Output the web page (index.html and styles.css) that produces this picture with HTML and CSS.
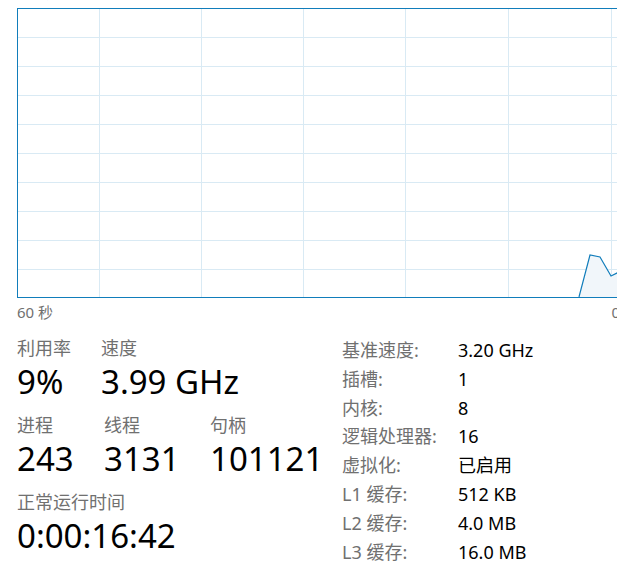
FILE: index.html
```html
<!DOCTYPE html>
<html lang="zh-CN">
<head>
    <meta charset="UTF-8">
    <meta name="viewport" content="width=device-width, initial-scale=1.0">
    <title>CPU</title>
    <link rel="stylesheet" href="styles.css">
</head>
<body>
    <div class="panel">
        <div class="chart-head">
            <span>% 利用率</span>
            <span>100%</span>
        </div>

        <div class="chart">
            <svg width="601" height="288" viewBox="0 0 601 288">
                <g class="grid">
                    <line x1="81.5" y1="0" x2="81.5" y2="288"/>
                    <line x1="183.5" y1="0" x2="183.5" y2="288"/>
                    <line x1="285.5" y1="0" x2="285.5" y2="288"/>
                    <line x1="387.5" y1="0" x2="387.5" y2="288"/>
                    <line x1="490.5" y1="0" x2="490.5" y2="288"/>
                    <line x1="593.5" y1="0" x2="593.5" y2="288"/>
                    <line x1="0" y1="28.5" x2="601" y2="28.5"/>
                    <line x1="0" y1="57.5" x2="601" y2="57.5"/>
                    <line x1="0" y1="86.5" x2="601" y2="86.5"/>
                    <line x1="0" y1="115.5" x2="601" y2="115.5"/>
                    <line x1="0" y1="144.5" x2="601" y2="144.5"/>
                    <line x1="0" y1="173.5" x2="601" y2="173.5"/>
                    <line x1="0" y1="202.5" x2="601" y2="202.5"/>
                    <line x1="0" y1="231.5" x2="601" y2="231.5"/>
                    <line x1="0" y1="260.5" x2="601" y2="260.5"/>
                </g>
                <polygon class="area" points="561,288 572,246 582,248 593,267 601,263 601,288"/>
                <polyline class="line" points="561,288 572,246 582,248 593,267 601,263"/>
            </svg>
        </div>

        <div class="axis">
            <span>60 秒</span>
            <span>0</span>
        </div>

        <div class="details">
            <div class="dynamic">
                <div class="stat-row">
                    <div class="stat w84">
                        <div class="label">利用率</div>
                        <div class="value">9%</div>
                    </div>
                    <div class="stat">
                        <div class="label">速度</div>
                        <div class="value">3.99 GHz</div>
                    </div>
                </div>
                <div class="stat-row">
                    <div class="stat w87">
                        <div class="label">进程</div>
                        <div class="value">243</div>
                    </div>
                    <div class="stat w106">
                        <div class="label">线程</div>
                        <div class="value">3131</div>
                    </div>
                    <div class="stat">
                        <div class="label">句柄</div>
                        <div class="value">101121</div>
                    </div>
                </div>
                <div class="stat-row">
                    <div class="stat">
                        <div class="label">正常运行时间</div>
                        <div class="value">0:00:16:42</div>
                    </div>
                </div>
            </div>

            <div class="specs">
                <div class="spec-label">基准速度:</div><div class="spec-value">3.20 GHz</div>
                <div class="spec-label">插槽:</div><div class="spec-value">1</div>
                <div class="spec-label">内核:</div><div class="spec-value">8</div>
                <div class="spec-label">逻辑处理器:</div><div class="spec-value">16</div>
                <div class="spec-label">虚拟化:</div><div class="spec-value">已启用</div>
                <div class="spec-label">L1 缓存:</div><div class="spec-value">512 KB</div>
                <div class="spec-label">L2 缓存:</div><div class="spec-value">4.0 MB</div>
                <div class="spec-label">L3 缓存:</div><div class="spec-value">16.0 MB</div>
            </div>
        </div>
    </div>
</body>
</html>
```

FILE: styles.css
```css
html, body {
    margin: 0;
    padding: 0;
    overflow: hidden;
}

body {
    font-family: 'Noto Sans', 'Noto Sans CJK SC', sans-serif;
    background-color: #ffffff;
    color: #000000;
}

.panel {
    width: 603px;
    padding-left: 17px;
}

.chart-head {
    display: flex;
    justify-content: space-between;
    font-size: 14px;
    line-height: 18px;
    color: #707070;
    margin-top: -16px;
    margin-bottom: 6px;
}

.chart {
    border: 1px solid #117dbb;
    height: 288px;
    background-color: #ffffff;
}

.chart svg {
    display: block;
}

.grid line {
    stroke: #d9eaf4;
    stroke-width: 1;
}

.area {
    fill: #f1f6fa;
}

.line {
    fill: none;
    stroke: #117dbb;
    stroke-width: 1.2;
}

.axis {
    display: flex;
    justify-content: space-between;
    font-size: 15px;
    line-height: 20px;
    color: #707070;
    margin-top: 4px;
}

.details {
    display: flex;
    margin-top: 14px;
}

.dynamic {
    width: 325px;
}

.stat-row {
    display: flex;
    margin-bottom: 9px;
}

.w84 { width: 84px; }
.w87 { width: 87px; }
.w106 { width: 106px; }

.label {
    font-size: 18px;
    line-height: 24px;
    color: #707070;
}

.value {
    font-size: 33px;
    line-height: 44px;
}

.specs {
    display: grid;
    grid-template-columns: 116px auto;
    grid-auto-rows: 28.8px;
    font-size: 18px;
    line-height: 28px;
}

.spec-label {
    color: #707070;
}
```
